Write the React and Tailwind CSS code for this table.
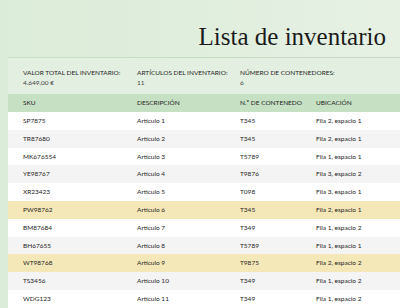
import React from "react";

const rows = [
  ["SP7875", "Artículo 1", "T345", "Fila 2, espacio 1"],
  ["TR87680", "Artículo 2", "T345", "Fila 2, espacio 1"],
  ["MK676554", "Artículo 3", "T5789", "Fila 1, espacio 1"],
  ["YE98767", "Artículo 4", "T9876", "Fila 3, espacio 2"],
  ["XR23423", "Artículo 5", "T098", "Fila 3, espacio 1"],
  ["PW98762", "Artículo 6", "T345", "Fila 2, espacio 1", true],
  ["BM87684", "Artículo 7", "T349", "Fila 1, espacio 2"],
  ["BH67655", "Artículo 8", "T5789", "Fila 1, espacio 1"],
  ["WT98768", "Artículo 9", "T9875", "Fila 2, espacio 2", true],
  ["TS3456", "Artículo 10", "T349", "Fila 1, espacio 2"],
  ["WDG123", "Artículo 11", "T349", "Fila 1, espacio 2"],
];

const sans = { fontFamily: "Lato, 'Open Sans', sans-serif" };

export default function App() {
  return (
    <div
      className="w-[400px] h-[308px] overflow-hidden bg-gradient-to-r from-[#dbecd8] to-[#e6f1e4] text-[#1e1e1e]"
      style={sans}
    >
      <div className="pl-[8px]">
        {/* title */}
        <div className="h-[58px] flex items-end justify-end pr-[14px] pb-[8px] border-b border-[#c9dcc6]">
          <h1 className="text-[25px] leading-none font-['Liberation_Serif',serif] text-[#1b1b1b]">
            Lista de inventario
          </h1>
        </div>

        {/* summary */}
        <div className="h-[36px] flex pt-[10px] text-[6.5px] leading-[10px] bg-[#e3efe1]">
          <div className="w-[129px] pl-[15px]">
            <div className="uppercase">Valor total del inventario:</div>
            <div className="text-[#444]">4.649,00 €</div>
          </div>
          <div className="w-[103px]">
            <div className="uppercase">Artículos del inventario:</div>
            <div className="text-[#444]">11</div>
          </div>
          <div>
            <div className="uppercase">Número de contenedores:</div>
            <div className="text-[#444]">6</div>
          </div>
        </div>

        {/* table */}
        <div className="text-[6.5px]">
          <div className="h-[18px] flex items-center bg-[#c5e0c3] uppercase">
            <div className="w-[129px] pl-[15px]">SKU</div>
            <div className="w-[103px]">Descripción</div>
            <div className="w-[76px]">N.º de contenedo</div>
            <div>Ubicación</div>
          </div>
          {rows.map((r, i) => (
            <div
              key={i}
              className={`h-[17.8px] flex items-center ${
                r[4] ? "bg-[#f5e8b8]" : i % 2 ? "bg-[#f4f4f4]" : "bg-white"
              }`}
            >
              <div className="w-[129px] pl-[15px]">{r[0]}</div>
              <div className="w-[103px]">{r[1]}</div>
              <div className="w-[76px]">{r[2]}</div>
              <div>{r[3]}</div>
            </div>
          ))}
        </div>
      </div>
    </div>
  );
}
